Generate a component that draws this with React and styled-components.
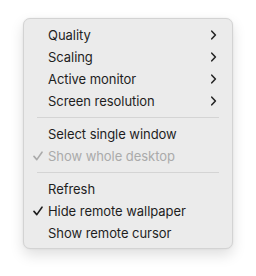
import React from "react";
import styled, { createGlobalStyle } from "styled-components";

const items = [
  { label: "Quality", submenu: true },
  { label: "Scaling", submenu: true },
  { label: "Active monitor", submenu: true },
  { label: "Screen resolution", submenu: true },
  { separator: true },
  { label: "Select single window" },
  { label: "Show whole desktop", checked: true, disabled: true },
  { separator: true },
  { label: "Refresh" },
  { label: "Hide remote wallpaper", checked: true },
  { label: "Show remote cursor" },
];

const App = () => {
  return (
    <>
      <GlobalStyle />
      <Page>
        <Menu>
          {items.map((item, i) =>
            item.separator ? (
              <Separator key={i} />
            ) : (
              <Row key={i} $disabled={item.disabled}>
                <CheckSlot>
                  {item.checked && (
                    <svg width="10" height="10" viewBox="0 0 10 10">
                      <path
                        d="M1 5.4 L3.8 8.6 L9 1.2"
                        fill="none"
                        stroke="currentColor"
                        strokeWidth="1.6"
                        strokeLinecap="round"
                        strokeLinejoin="round"
                      />
                    </svg>
                  )}
                </CheckSlot>
                <Label>{item.label}</Label>
                {item.submenu && (
                  <Chevron width="7" height="10" viewBox="0 0 7 10">
                    <path
                      d="M1.8 1.2 L5.4 5 L1.8 8.8"
                      fill="none"
                      stroke="currentColor"
                      strokeWidth="1.6"
                      strokeLinecap="round"
                      strokeLinejoin="round"
                    />
                  </Chevron>
                )}
              </Row>
            )
          )}
        </Menu>
      </Page>
    </>
  );
};

const GlobalStyle = createGlobalStyle`
  body {
    margin: 0;
    background: #ffffff;
    font-family: Inter, "Liberation Sans", sans-serif;
  }
`;

const Page = styled.div`
  width: 256px;
  height: 276px;
  padding: 18px 0 0 23px;
  box-sizing: border-box;
`;

const Menu = styled.div`
  width: 210px;
  box-sizing: border-box;
  padding: 5px 0 4px;
  background: #ebebeb;
  border: 1px solid #d3d3d3;
  border-radius: 7px;
  box-shadow: 0 6px 14px rgba(0, 0, 0, 0.13), 0 0 2px rgba(0, 0, 0, 0.08);
  display: flex;
  flex-direction: column;
`;

const Row = styled.div`
  height: 22px;
  display: flex;
  align-items: center;
  padding: 0 15px 0 9px;
  color: ${(p) => (p.$disabled ? "#aaaaaa" : "#1e1e1e")};
  font-size: 13px;
`;

const CheckSlot = styled.span`
  width: 15px;
  display: flex;
  align-items: center;
  justify-content: flex-start;
`;

const Label = styled.span`
  flex: 1;
  letter-spacing: -0.05px;
`;

const Chevron = styled.svg`
  color: #262626;
`;

const Separator = styled.div`
  height: 1px;
  margin: 5px 13px 5px 13px;
  background: #d4d4d4;
`;

export default App;
